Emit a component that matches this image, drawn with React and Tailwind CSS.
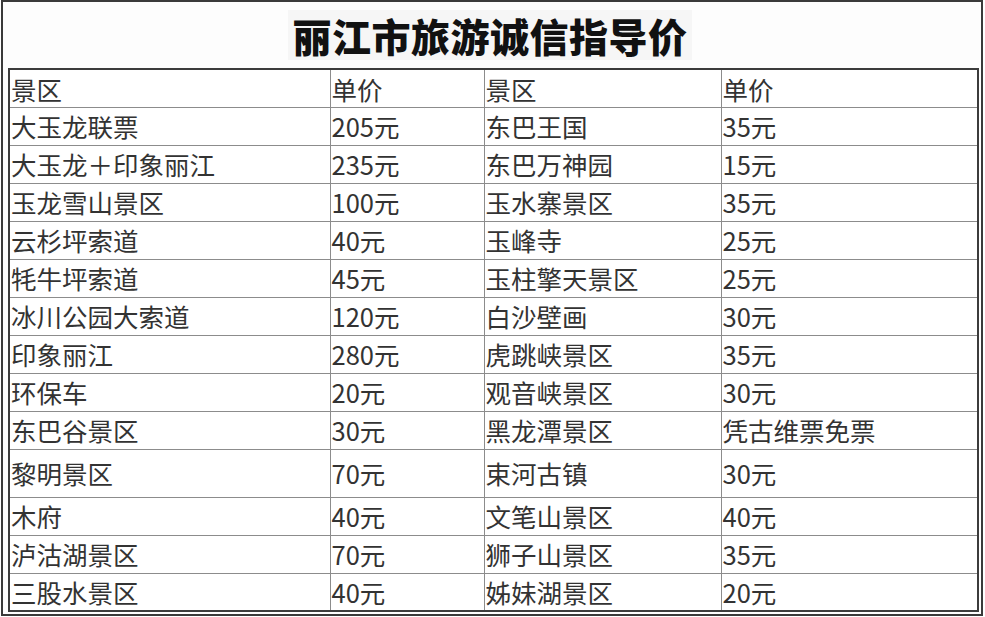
const rows = [
  ['大玉龙联票', '205元', '东巴王国', '35元'],
  ['大玉龙＋印象丽江', '235元', '东巴万神园', '15元'],
  ['玉龙雪山景区', '100元', '玉水寨景区', '35元'],
  ['云杉坪索道', '40元', '玉峰寺', '25元'],
  ['牦牛坪索道', '45元', '玉柱擎天景区', '25元'],
  ['冰川公园大索道', '120元', '白沙壁画', '30元'],
  ['印象丽江', '280元', '虎跳峡景区', '35元'],
  ['环保车', '20元', '观音峡景区', '30元'],
  ['东巴谷景区', '30元', '黑龙潭景区', '凭古维票免票'],
  ['黎明景区', '70元', '束河古镇', '30元', 'tall'],
  ['木府', '40元', '文笔山景区', '40元'],
  ['泸沽湖景区', '70元', '狮子山景区', '35元'],
  ['三股水景区', '40元', '姊妹湖景区', '20元'],
];

const font = { fontFamily: '"Microsoft YaHei", "Noto Sans CJK SC", "Noto Sans", sans-serif' };

export default function App() {
  return (
    <div className="w-[985px] h-[617px] bg-white overflow-hidden" style={font}>
      <div className="ml-[1px] w-[982px] h-[616px] border-2 border-[#3a3a3a] bg-[#fdfdfd] flex flex-col">
        <div className="h-[66px] flex items-center justify-center pr-[4px]">
          <h1 className="px-[4px] bg-[#f6f6f6] text-[39px] leading-[50px] font-black text-[#111] tracking-[0.5px]">
            丽江市旅游诚信指导价
          </h1>
        </div>
        <div className="pl-[5px]">
          <table className="w-[969px] border-collapse border-2 border-[#3c3c3c] table-fixed text-[25.5px] text-[#333] bg-white">
            <colgroup>
              <col className="w-[321px]" />
              <col className="w-[154px]" />
              <col className="w-[237px]" />
              <col className="w-[257px]" />
            </colgroup>
            <tbody>
              <tr className="h-[38px]">
                {['景区', '单价', '景区', '单价'].map((t, i) => (
                  <td key={i} className="border border-[#8c8c8c] pl-[1px] leading-none">
                    {t}
                  </td>
                ))}
              </tr>
              {rows.map((r, i) => (
                <tr key={i} className={r[4] ? 'h-[48px]' : 'h-[38px]'}>
                  {r.slice(0, 4).map((t, j) => (
                    <td key={j} className="border border-[#8c8c8c] pl-[1px] leading-none whitespace-nowrap">
                      {t}
                    </td>
                  ))}
                </tr>
              ))}
            </tbody>
          </table>
        </div>
      </div>
    </div>
  );
}
